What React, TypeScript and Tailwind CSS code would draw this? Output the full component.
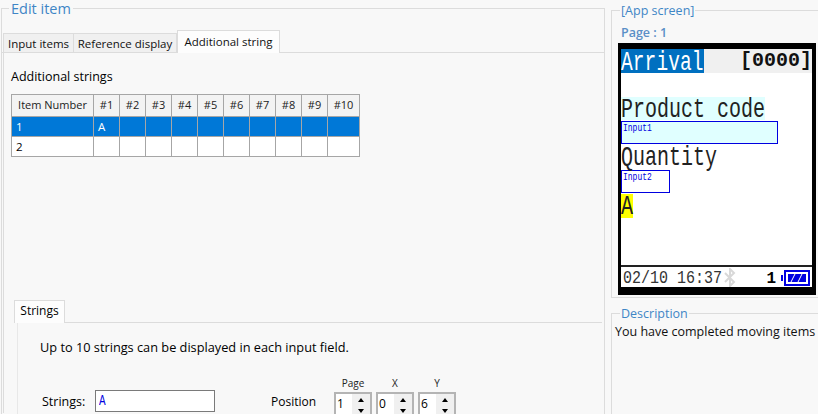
const ui = "font-['Open_Sans','Noto_Sans',sans-serif]";
const mono = "font-['Liberation_Mono',monospace]";

function Spin({ value }: { value: string }) {
  return (
    <div className="w-[38px] h-[30px] border-2 border-b-0 border-[#b4b4b4] bg-white flex justify-between shrink-0">
      <span className="pl-[1px] pt-[2px] text-[12px] leading-[16px] text-black">{value}</span>
      <div className="w-[18px] flex flex-col items-center gap-[1px] bg-[#f0f0f0] pt-[1px]">
        <div className="w-full h-[10px] flex items-center justify-center">
          <div className="w-0 h-0 border-x-[3px] border-x-transparent border-b-[4px] border-b-black" />
        </div>
        <div className="w-full h-[10px] flex items-center justify-center">
          <div className="w-0 h-0 border-x-[3px] border-x-transparent border-t-[4px] border-t-black" />
        </div>
      </div>
    </div>
  );
}

function Table() {
  const cols = ["#1", "#2", "#3", "#4", "#5", "#6", "#7", "#8", "#9", "#10"];
  const cell = "border border-[#a6a6a6] p-0";
  return (
    <table className="border-collapse table-fixed w-[348px] text-[11.5px] ml-[8px]">
      <colgroup>
        <col className="w-[82px]" />
        {cols.map((c) => (
          <col key={c} className={c === "#10" ? "w-[32px]" : "w-[26px]"} />
        ))}
      </colgroup>
      <thead>
        <tr className="h-[22px] bg-[#f3f3f3] text-[#222] text-[11px]">
          <th className={`${cell} font-normal`}>Item Number</th>
          {cols.map((c) => (
            <th key={c} className={`${cell} font-normal`}>{c}</th>
          ))}
        </tr>
      </thead>
      <tbody>
        <tr className="h-[20px] bg-[#0078d7] text-white">
          <td className={`${cell} pl-[4px]`}>1</td>
          <td className={`${cell} pl-[4px]`}>A</td>
          {cols.slice(1).map((c) => (
            <td key={c} className={cell} />
          ))}
        </tr>
        <tr className="h-[20px] bg-white text-black">
          <td className={`${cell} pl-[4px]`}>2</td>
          {cols.map((c) => (
            <td key={c} className={cell} />
          ))}
        </tr>
      </tbody>
    </table>
  );
}

function Phone() {
  // device font is tall and narrow, so stretch it vertically
  const big = `${mono} text-[20px] leading-[16px] pt-[1px] origin-top scale-y-[1.4] whitespace-pre text-[#222]`;
  const small = `${mono} text-[8px] leading-[8px] text-[#0000e0] origin-top scale-y-[1.25] pl-[1px] pt-[1px]`;
  return (
    <div className="w-[198px] h-[252px] bg-black pt-[6px] pl-[3px] pr-[4px] pb-[8px] ml-[6px]">
      <div className="w-full h-full bg-white flex flex-col overflow-hidden">
        <div className="h-[24px] bg-[#f0f0f0] flex justify-between shrink-0">
          <div className="w-[83px] h-[24px] bg-[#0070c0]">
            <div className={`${mono} text-[19.5px] tracking-[0.1px] leading-[16px] pt-[2px] origin-top scale-y-[1.43] whitespace-pre text-white`}>Arrival</div>
          </div>
          <div className={`${mono} text-[20px] leading-[24px] font-bold text-[#111]`}>[0000]</div>
        </div>
        <div className="h-[24px] shrink-0" />
        <div className="w-[144px] h-[23px] bg-[#e0ffff] shrink-0">
          <div className={big}>Product code</div>
        </div>
        <div className="w-[157px] h-[23px] mt-[1px] border border-[#0000e0] bg-[#e0ffff] shrink-0">
          <div className={small}>Input1</div>
        </div>
        <div className="h-[23px] mt-[1px] shrink-0">
          <div className={big}>Quantity</div>
        </div>
        <div className="w-[49px] h-[23px] mt-[2px] border border-[#0000e0] shrink-0">
          <div className={small}>Input2</div>
        </div>
        <div className="w-[12px] h-[24px] mt-[1px] bg-[#ffff00] shrink-0">
          <div className={big}>A</div>
        </div>
        <div className="flex-1" />
        <div className="h-[22px] border-t-2 border-[#222] flex items-center pl-[2px] pr-[2px] shrink-0">
          <span className={`${mono} text-[15px] leading-[16px] text-[#333] origin-center scale-y-[1.27] translate-y-[2px] w-[101px] shrink-0 whitespace-pre`}>02/10 16:37</span>
          <svg width="12" height="19" viewBox="0 0 12 19" fill="none" stroke="#d8d8d8" strokeWidth="2" className="shrink-0">
            <path d="M1 5l9 9-4 4V1l4 4-9 9" />
          </svg>
          <span className={`${mono} ml-auto text-[16px] leading-[20px] font-bold text-black mr-[5px] translate-y-[2px]`}>1</span>
          <svg width="29" height="16" viewBox="0 0 29 16" className="shrink-0 mt-[1px]">
            <rect x="0" y="5" width="2" height="6" fill="#0000e0" />
            <rect x="4" y="1" width="24" height="14" fill="white" stroke="#0000e0" strokeWidth="2" />
            <rect x="7" y="4" width="18" height="8" fill="#0000e0" />
            <path d="M10 12l4-8M17 12l4-8" stroke="white" strokeWidth="1" />
          </svg>
        </div>
      </div>
    </div>
  );
}

export default function App() {
  return (
    <div className={`${ui} w-[818px] h-[414px] overflow-hidden bg-[#f8f8f8] text-[12px] text-black flex`}>
      {/* Edit item group */}
      <div className="relative w-[604px] h-[414px] ml-[1px] mt-[8px] border-l border-t border-r border-[#dcdcdc] pt-[21px] shrink-0">
        <span className="absolute left-[7px] -top-[9px] px-[2px] bg-[#f8f8f8] text-[14.5px] leading-[18px] text-[#3f86c6]">Edit item</span>
        <div className="flex items-end h-[23px] pl-[1px] border-b border-[#dcdcdc] text-[11.5px]">
          <div className="w-[71px] h-[19px] bg-[#f0f0f0] border border-b-0 border-[#dcdcdc] text-center leading-[20px] text-[#111]">Input items</div>
          <div className="w-[103px] h-[19px] bg-[#f0f0f0] border border-l-0 border-b-0 border-[#dcdcdc] text-center leading-[20px] text-[#111]">Reference display</div>
          <div className="w-[103px] h-[23px] -mb-[1px] bg-[#fdfdfd] border border-b-0 border-[#dcdcdc] text-center leading-[22px] text-[#111]">Additional string</div>
        </div>
        <div className="ml-[1px] border-l border-[#dcdcdc] h-[360px]">
          <div className="pl-[7px] pt-[15px] leading-[18px] mb-[9px] text-[12.5px]">Additional strings</div>
          <div className="-ml-[1px] -mt-[1px]">
            <Table />
          </div>
          <div className="mt-[143px] ml-[10px] mr-[2px]">
            <div className="h-[23px] border-b border-[#dcdcdc] flex">
              <div className="w-[51px] h-[23px] bg-[#fdfdfd] border border-b-0 border-[#dcdcdc] text-center leading-[20px]">Strings</div>
            </div>
            <div className="ml-[3px] border-l border-[#e8e8e8] pl-[22px] pt-[15px]">
              <div className="leading-[18px] text-[12.75px]">Up to 10 strings can be displayed in each input field.</div>
              <div className="flex mt-[25px]">
                <span className="pl-[2px] pt-[12px] w-[55px] leading-[18px] text-[12.5px]">Strings:</span>
                <div className="mt-[9px] w-[120px] h-[22px] border border-[#7a7a7a] bg-white pl-[3px] text-[#0000e0]">
                  <div className={`${mono} text-[11px] leading-[11px] pt-[2px] origin-top scale-y-[1.4]`}>A</div>
                </div>
                <span className="ml-[56px] pt-[12px] w-[63px] leading-[18px]">Position</span>
                <div className="flex flex-col -mt-[5px]">
                  <div className="flex gap-[4px] text-[10px] leading-[14px] text-[#222] h-[16px] text-center">
                    <span className="w-[38px]">Page</span>
                    <span className="w-[38px]">X</span>
                    <span className="w-[38px]">Y</span>
                  </div>
                  <div className="flex gap-[4px]">
                    <Spin value="1" />
                    <Spin value="0" />
                    <Spin value="6" />
                  </div>
                </div>
              </div>
            </div>
          </div>
        </div>
      </div>

      {/* Right column */}
      <div className="ml-[6px] flex-1 flex flex-col min-w-0">
        <div className="relative mt-[10px] h-[288px] border-l border-t border-b border-[#dcdcdc] pt-[13px]">
          <span className="absolute left-[8px] -top-[9px] px-[1px] bg-[#f8f8f8] text-[12.5px] leading-[18px] text-[#3f86c6]">[App screen]</span>
          <div className="pl-[9px] h-[19px] leading-[18px] text-[#5b8fc7] font-semibold text-[12.5px]">Page : 1</div>
          <Phone />
        </div>
        <div className="relative mt-[15px] flex-1 border-l border-t border-[#dcdcdc] pt-[8px]">
          <span className="absolute left-[8px] -top-[9px] px-[1px] bg-[#f8f8f8] text-[12.5px] leading-[18px] text-[#3f86c6]">Description</span>
          <div className="pl-[3px] pt-[1px] text-[12.5px] leading-[18px] whitespace-nowrap text-[#111]">You have completed moving items</div>
        </div>
      </div>
    </div>
  );
}
